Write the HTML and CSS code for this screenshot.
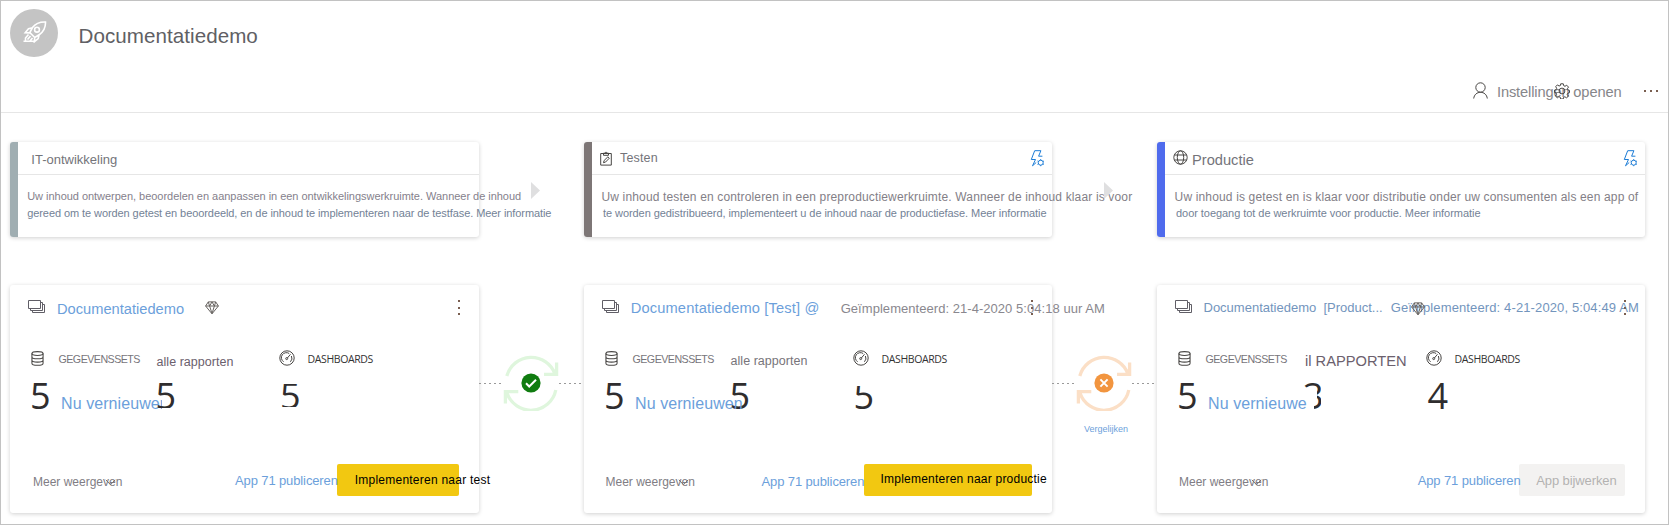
FILE: index.html
```html
<!DOCTYPE html>
<html lang="nl">
<head>
<meta charset="utf-8">
<title>Documentatiedemo</title>
<link rel="stylesheet" href="styles.css">
</head>
<body>
<svg class="defs" aria-hidden="true">
  <symbol id="stack" viewBox="0 0 17 14"><path d="M.5.500h12v8H.5zM12.500 2.500h2v8h-12v-2M14.500 4.500h2v8h-12v-2"/></symbol>
  <symbol id="db" viewBox="0 0 12 14"><ellipse cx="6" cy="2.400" rx="5.200" ry="1.800"/><path d="M.8 2.400v9c0 1 2.300 1.900 5.200 1.900s5.200-.9 5.200-1.900v-9M.8 5.500c0 1 2.300 1.800 5.200 1.800s5.200-.8 5.200-1.800M.8 8.600c0 1 2.300 1.800 5.200 1.800s5.200-.8 5.200-1.800"/></symbol>
  <symbol id="gauge" viewBox="0 0 16 16"><circle cx="8" cy="8" r="7.200"/><path d="M4.600 11.800a5 5 0 0 1 5.600-8.300M12.400 6a5 5 0 0 1-1 5.800M8.200 8.200l3.300-3.900"/><circle cx="7.700" cy="8.600" r="1"/></symbol>
  <symbol id="gem" viewBox="0 0 14 14"><path d="M3.300.9h7.400L13.400 5 7 12.800.6 5zM.6 5h12.800M3.300.9 4.600 5 7 12.600 9.400 5l1.300-4.100M4.600 5 7 .9 9.400 5"/></symbol>
  <symbol id="chev" viewBox="0 0 11 7"><path d="M.8.8l4.700 4.900L10.200.8"/></symbol>
  <symbol id="rules" viewBox="0 0 15 17"><path d="M5.500 9.500H1.300L4.700.7h6.200L8.600 6.200h3.800M5.500 9.500 2.500 15.800l3.700-3.300"/><circle cx="10.700" cy="12.700" r="2.500"/><path d="M10.700 9.200v1M10.700 15.200v1M7.500 11l.9.500M13 13.900l.9.500M13.900 11l-.9.500M8.400 13.900l-.9.500"/></symbol>
  <symbol id="sync" viewBox="0 0 56 56"><path d="M3.800 21A25.300 25.300 0 0 1 52 19M41 19.400h12.600V7.500M52.800 35A25.300 25.300 0 0 1 4 38M15.300 36.600H2.400v11.800"/></symbol>
</svg>
<div class="page">
  <header class="top">
    <div class="brand">
      <span class="avatar"><svg viewBox="0 0 24 22" width="24" height="22"><path d="M22.500 1C17 .8 12.500 2.500 9.500 6.500L6.800 11.500l5 5 4.700-3C20.500 10.500 22.700 6.500 22.500 1zM9.500 6.700 5.500 7.700 2.200 11.700l4.600.2M16.200 13.500l-1 4-3.800 3.200.3-4.200M5.500 13.500 2.500 17v3M.500 20.200h11M7.500 15 4.500 18.500M9.500 17l-2.500 3"/><circle cx="14" cy="8.700" r="2.400"/></svg></span>
      <h1>Documentatiedemo</h1>
    </div>
    <nav class="tools">
      <svg class="person" viewBox="0 0 15 17" width="15" height="17"><circle cx="7.500" cy="5.500" r="4.700"/><path d="M.7 16.500C1.200 12.600 4 10.300 7.500 10.300s6.300 2.300 6.800 6.200"/></svg>
      <span class="open">Instellingen openen
        <svg class="gear" viewBox="0 0 16 16" width="16" height="16"><path d="M6.700.8h2.600l.4 1.900 1.300.6 1.700-1.100 1.800 1.900-1.100 1.600.6 1.300 1.500.4v2.300l-1.700.5-.6 1.300 1.200 1.600-1.800 1.700-1.700-1-1.300.5-.4 1.700H6.700l-.4-1.700-1.400-.6-1.600 1.100-1.800-1.700 1.100-1.700L2 9.900l-1.400-.4V7L2.200 6.600l.5-1.300-1-1.600 1.700-1.800 1.700 1.100 1.300-.5z"/><circle cx="8" cy="8" r="2.900"/></svg>
      </span>
      <span class="dots"><i></i><i></i><i></i></span>
    </nav>
  </header>

  <main class="board">
    <section class="stage dev">
      <h2>IT-ontwikkeling</h2>
      <p class="lead">Uw inhoud ontwerpen, beoordelen en aanpassen in een ontwikkelingswerkruimte. Wanneer de inhoud</p>
      <p class="rest">gereed om te worden getest en beoordeeld, en de inhoud te implementeren naar de testfase. Meer informatie</p>
    </section>
    <div class="next"></div>
    <section class="stage test">
      <h2><svg class="clip" viewBox="0 0 12 15" width="12" height="15"><path d="M.7 2.500h10.600v11.600H.7zM3.500 4.300V2.200h1.400C5 .9 7 .9 7.100 2.200h1.400v2.100zM3.500 11.700l.6-2.200 3.800-3.700 1.400 1.400-3.800 3.900z"/></svg>Testen<svg class="rules"><use href="#rules"/></svg></h2>
      <p class="lead">Uw inhoud testen en controleren in een preproductiewerkruimte. Wanneer de inhoud klaar is voor</p>
      <p class="rest">te worden gedistribueerd, implementeert u de inhoud naar de productiefase. Meer informatie</p>
    </section>
    <div class="next"></div>
    <section class="stage prod">
      <h2><svg class="globe" viewBox="0 0 15 15" width="15" height="15"><circle cx="7.500" cy="7.500" r="6.700"/><ellipse cx="7.500" cy="7.500" rx="3.200" ry="6.700"/><path d="M1.500 5h12M1.500 10h12"/></svg>Productie<svg class="rules"><use href="#rules"/></svg></h2>
      <p class="lead">Uw inhoud is getest en is klaar voor distributie onder uw consumenten als een app of</p>
      <p class="rest">door toegang tot de werkruimte voor productie. Meer informatie</p>
    </section>

    <section class="space dev">
      <div class="head">
        <svg class="stack"><use href="#stack"/></svg>
        <a class="name">Documentatiedemo</a>
        <svg class="gem"><use href="#gem"/></svg>
        <span class="kebab"><i></i><i></i><i></i></span>
      </div>
      <div class="metrics">
        <div class="metric sets"><svg class="db"><use href="#db"/></svg><span class="label">GEGEVENSSETS</span><b>5</b><a>Nu vernieuwen</a></div>
        <div class="metric reports"><span class="label">alle rapporten</span><b>5</b></div>
        <div class="metric boards"><svg class="gauge"><use href="#gauge"/></svg><span class="label">DASHBOARDS</span><b>5</b></div>
      </div>
      <div class="foot">
        <span class="more">Meer weergeven<svg class="chev"><use href="#chev"/></svg></span>
        <a class="publish">App 71 publiceren</a>
        <button>Implementeren naar test</button>
      </div>
    </section>
    <div class="link ok">
      <svg class="sync"><use href="#sync"/></svg>
      <svg class="state" viewBox="0 0 20 20"><circle cx="10" cy="10" r="9.600"/><path d="M5 10.300l3.200 3.200L15 6.700"/></svg>
    </div>
    <section class="space test">
      <div class="head">
        <svg class="stack"><use href="#stack"/></svg>
        <a class="name">Documentatiedemo [Test] @</a>
        <span class="date">Geïmplementeerd: 21-4-2020 5:04:18 uur AM</span>
        <span class="kebab"><i></i><i></i><i></i></span>
      </div>
      <div class="metrics">
        <div class="metric sets"><svg class="db"><use href="#db"/></svg><span class="label">GEGEVENSSETS</span><b>5</b><a>Nu vernieuwen</a></div>
        <div class="metric reports"><span class="label">alle rapporten</span><b>5</b></div>
        <div class="metric boards"><svg class="gauge"><use href="#gauge"/></svg><span class="label">DASHBOARDS</span><b>5</b></div>
      </div>
      <div class="foot">
        <span class="more">Meer weergeven<svg class="chev"><use href="#chev"/></svg></span>
        <a class="publish">App 71 publiceren</a>
        <button>Implementeren naar productie</button>
      </div>
    </section>
    <div class="link diff">
      <svg class="sync"><use href="#sync"/></svg>
      <svg class="state" viewBox="0 0 20 20"><circle cx="10" cy="10" r="9.600"/><path d="M6.400 6.400l7.200 7.200M13.600 6.400l-7.200 7.200"/></svg>
      <a>Vergelijken</a>
    </div>
    <section class="space prod">
      <div class="head">
        <svg class="stack"><use href="#stack"/></svg>
        <a class="name">Documentatiedemo&nbsp; [Product...</a>
        <span class="date">Geïmplementeerd: 4-21-2020, 5:04:49 AM</span>
        <svg class="gem"><use href="#gem"/></svg>
        <span class="kebab"><i></i><i></i><i></i></span>
      </div>
      <div class="metrics">
        <div class="metric sets"><svg class="db"><use href="#db"/></svg><span class="label">GEGEVENSSETS</span><b>5</b><a>Nu vernieuwen</a></div>
        <div class="metric reports"><span class="label">il RAPPORTEN</span><b>3</b></div>
        <div class="metric boards"><svg class="gauge"><use href="#gauge"/></svg><span class="label">DASHBOARDS</span><b>4</b></div>
      </div>
      <div class="foot">
        <span class="more">Meer weergeven<svg class="chev"><use href="#chev"/></svg></span>
        <a class="publish">App 71 publiceren</a>
        <button disabled>App bijwerken</button>
      </div>
    </section>
  </main>
</div>
</body>
</html>
```
FILE: styles.css
```css
* { box-sizing: border-box; }
body { margin: 0; background: #fff; font-family: "Liberation Sans", Arial, sans-serif; line-height: 20px; white-space: nowrap; }
h1, h2, p { margin: 0; font-weight: 400; }
svg { fill: none; stroke: #484644; stroke-width: 1; flex: none; display: block; }
a { color: #6c9fdb; }
.defs { position: absolute; width: 0; height: 0; }
.page { width: 1669px; height: 525px; border: 1px solid #c2c2c2; overflow: hidden; }

/* Header */
.top { height: 112px; border-bottom: 1px solid #e6e6e6; }
.brand { display: flex; padding: 8px 0 0 9px; height: 74px; }
.avatar { width: 48px; height: 48px; border-radius: 50%; background: #c4c4c4; display: flex; padding: 12px 0 0 13px; }
.avatar svg { stroke: #fff; stroke-width: 1.6; }
h1 { margin: 17px 0 0 20.5px; font-size: 20.600px; letter-spacing: .050px; color: #606064; }
.tools { display: flex; justify-content: flex-end; padding: 7px 10px 0 0; }
.person { margin-top: 0; }
.open { position: relative; margin-left: 9px; width: 147px; color: #86868a; font-size: 14.670px; letter-spacing: -.143px; }
.gear { position: absolute; left: 57px; top: 1px; }
.dots { display: flex; gap: 4px; padding-top: 8px; }
.dots i, .kebab i { width: 2px; height: 2px; background: #7a5f50; }

/* Columns: stage, gap, stage, gap, stage */
.board { display: grid; grid-template-columns: 469px 105px 468px 105px 488px; grid-template-rows: 95px 228px; row-gap: 48px; padding: 29px 0 0 9px; }
.stage, .space { border-radius: 3px; box-shadow: 0 1px 4px rgba(0, 0, 0, .19); }

/* Stage descriptions */
.stage { border-left: 8px solid; }
.stage.dev { border-color: #a0aeb2; }
.stage.test { border-color: #7d7676; }
.stage.prod { border-color: #4f6bed; }
.stage h2 { position: relative; display: flex; height: 33px; border-bottom: 1px solid #e6e6e6; color: #74747a; font-size: 13px; }
.dev h2 { padding: 8px 0 0 13.300px; }
.test h2 { padding: 6px 0 0 8px; font-size: 12.500px; letter-spacing: .150px; }
.prod h2 { padding: 8px 0 0 8px; font-size: 14.670px; }
.clip { margin: 3px 8px 0 0; }
.globe { margin: 0 4px 0 0; }
.stage .rules { position: absolute; right: 7px; top: 8px; width: 15px; height: 17px; stroke: #1c7cd6; }
.lead { height: 17px; margin-top: 12px; padding-left: 9.500px; font-size: 12px; letter-spacing: .152px; color: #838087; }
.rest { margin-top: -1px; padding-left: 11px; font-size: 11px; letter-spacing: -.066px; color: #738296; }
.dev .lead { margin-top: 11px; font-size: 11px; letter-spacing: -.030px; color: #857f8c; }
.dev .lead, .dev .rest { padding-left: 9.200px; }
.dev .rest { margin-top: 0; letter-spacing: -.080px; }
.prod .lead { padding-left: 9.600px; }
.prod .rest { letter-spacing: -.050px; }
.next { width: 9px; height: 17px; margin: 40px 0 0 52px; background: #dfdfe0; clip-path: polygon(0 0, 100% 50%, 0 100%); }

/* Workspace cards */
.space { display: flex; flex-direction: column; }
.head { position: relative; display: flex; height: 64px; padding: 14px 0 0 18px; }
.stack { width: 17px; height: 14px; margin-top: 1px; stroke: #605e66; }
.name, .date { flex: none; }
.name { margin-left: 12px; width: 136px; font-size: 14.670px; }
.head .gem { width: 14px; height: 14px; margin-top: 2px; margin-left: 11.500px; stroke: #66625f; }
.kebab { position: absolute; right: 19px; top: 15px; display: flex; flex-direction: column; gap: 4.500px; }
.test .name { margin: -1px 0 0 11.700px; width: 210px; letter-spacing: .148px; }
.date { font-size: 13px; letter-spacing: .045px; color: #89878e; }
.prod .name { margin: -1px 0 0 11.500px; width: 187.200px; font-size: 13px; letter-spacing: 0; }
.prod .date { margin-top: -1px; letter-spacing: .124px; }
.prod .name, .prod .date { color: #7395bd; }
.prod .gem { position: absolute; left: 254px; top: 15px; margin-left: 0; }

.metrics { display: grid; grid-template-columns: 126px 122px 1fr; height: 115px; padding-left: 21px; }
.metric { display: grid; grid-template-columns: 28px 1fr; grid-template-rows: 27px 40px; align-items: start; }
.db { width: 13px; height: 15px; margin-top: 2px; }
.gauge { width: 16px; height: 16px; margin: 1px 0 0; }
.label { font-size: 10.670px; letter-spacing: -.520px; margin-left: -.500px; color: #77757b; }
.metric b { margin-left: -1px; font: 400 36px/40px "Open Sans", sans-serif; color: #2f2d2e; }
.sets a { margin: 18px 0 0 2px; font-size: 16px; letter-spacing: .080px; }
.reports { grid-template-columns: 1fr; }
.reports .label { margin-top: 3px; font-size: 12.500px; letter-spacing: .040px; color: #6b606d; }
.boards .label { font: 10.500px/20px "Open Sans", sans-serif; letter-spacing: -.380px; margin-left: .500px; color: #333; }
.dev .sets a { width: 101px; overflow: hidden; }
.dev .reports b { margin-left: -1.500px; clip-path: inset(0 0 8px 0); }
.dev .boards b { margin-left: 1px; clip-path: inset(8px 0 9px 0); }
.test .reports .label { margin-top: 2px; color: #77747a; }
.test .reports b { margin-left: -1.500px; }
.test .sets a { z-index: 1; }
.test .boards b { margin-left: .500px; clip-path: inset(10px 0 7px 0); }
.prod .sets a { width: 99px; overflow: hidden; }
.prod .reports .label { margin: 2px 0 0 1px; font-size: 14.670px; letter-spacing: 0; }
.prod .reports b { clip-path: polygon(0 0, 18px 0, 18px 33px, 11px 33px, 11px 22px, 14px 22px, 14px 13px, 0 13px); }
.prod .boards b { margin-left: 1.500px; }

.foot { display: flex; height: 32px; }
.more { position: relative; margin: 8px 0 0 23px; width: 202px; font-size: 12px; color: #807d84; }
.chev { position: absolute; left: 72px; top: 7px; width: 11px; height: 7px; stroke: #77716f; }
.publish { position: relative; z-index: 1; width: 102px; margin-top: 6.500px; font-size: 13px; letter-spacing: -.117px; }
button { width: 122px; height: 32px; padding: 1px 0 0 17.700px; border: 0; border-radius: 2px; background: #f2c811; color: #000; font: 12px/31px "Liberation Sans", Arial, sans-serif; letter-spacing: .240px; text-align: left; white-space: nowrap; }
.test .more { margin-left: 21.500px; width: 156px; }
.test .publish { width: 102.500px; margin-top: 7.500px; }
.test button { width: 168px; padding: 0 0 1px 16.500px; letter-spacing: .225px; }
.prod .more { margin-left: 22px; width: 238.700px; }
.prod .publish { width: 101.300px; }
.prod button { width: 106px; padding: 2px 0 0 17.300px; line-height: 30px; background: #f3f2f1; color: #b4b2b1; font-size: 13px; letter-spacing: -.102px; }

/* Connectors between cards */
.link { display: grid; grid-template: 56px 20px / 23px 57px 24px; padding-top: 70px; row-gap: 11px; color: #dff6dd; }
.link::before, .link::after { content: ""; height: 1px; margin-top: 28px; background: repeating-linear-gradient(90deg, #9a9a9a 0 2px, transparent 2px 5px); grid-row: 1; }
.link::before { grid-column: 1; }
.link::after { grid-column: 3; }
.sync { grid-area: 1 / 2; width: 56px; height: 56px; margin-left: 1px; stroke: currentColor; stroke-width: 3.300; }
.state { grid-area: 1 / 2; width: 20px; height: 20px; margin: 18px 0 0 19px; stroke: #fff; stroke-width: 2; }
.state circle { fill: #107c10; stroke: none; }
.diff { color: #fbdfc6; }
.diff .state circle { fill: #f2953f; }
.diff a { grid-area: 2 / 2; padding-left: 9px; margin-top: -3px; font-size: 9px; }
```
